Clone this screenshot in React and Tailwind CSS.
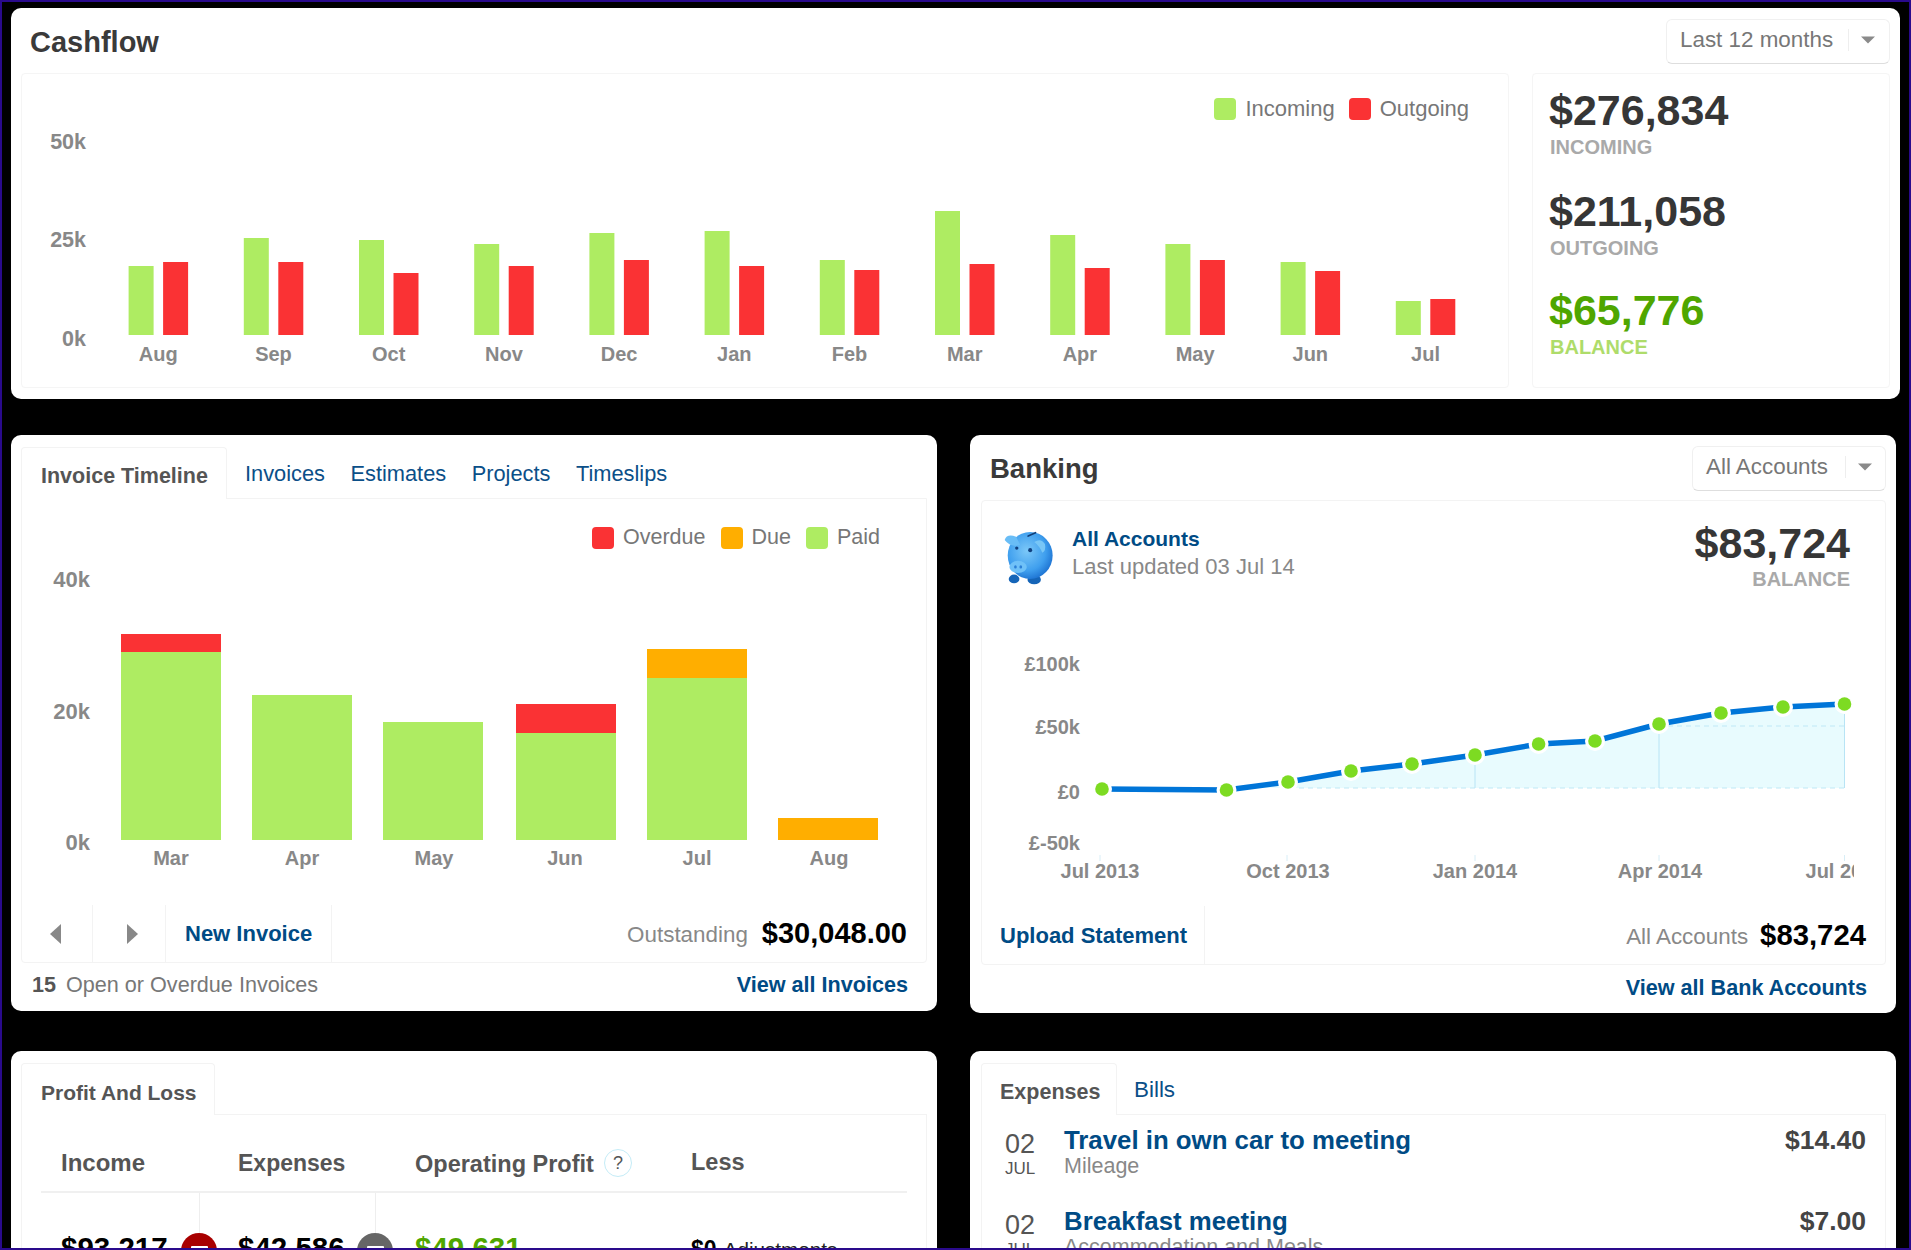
import React from "react";

const GREEN = "#aeec62";
const RED = "#fa3234";
const ORANGE = "#ffae00";

const cash = [
  ["Aug", 266, 262], ["Sep", 238, 262], ["Oct", 240, 273], ["Nov", 244, 266],
  ["Dec", 233, 260], ["Jan", 231, 266], ["Feb", 260, 270], ["Mar", 211, 264],
  ["Apr", 235, 268], ["May", 244, 260], ["Jun", 262, 271], ["Jul", 301, 299],
];

const inv = [
  { m: "Mar", x: 121, lx: 171, s: [[652, 840, GREEN], [634, 652, RED]] },
  { m: "Apr", x: 252, lx: 302, s: [[695, 840, GREEN]] },
  { m: "May", x: 383, lx: 434, s: [[722, 840, GREEN]] },
  { m: "Jun", x: 516, lx: 565, s: [[733, 840, GREEN], [704, 733, RED]] },
  { m: "Jul", x: 647, lx: 697, s: [[678, 840, GREEN], [649, 678, ORANGE]] },
  { m: "Aug", x: 778, lx: 829, s: [[818, 840, ORANGE]] },
];

const pts = [
  [1102, 789], [1226.5, 790], [1288, 782], [1351, 771], [1412, 764], [1475, 755],
  [1538.6, 744], [1595, 741], [1659, 724], [1721, 713], [1783, 707], [1844.5, 704],
];

function Caret() {
  return (
    <svg width="14" height="8" viewBox="0 0 14 8" className="block">
      <path d="M0 0.5 H14 L7 7.5 Z" fill="#8a8a8a" />
    </svg>
  );
}

function Dropdown({ label, w, textW }) {
  return (
    <div
      style={{ width: w }}
      className="flex h-[45px] items-center rounded-md border border-[#f0f0f0] border-b-[#dedede] bg-white pb-[3px] pl-[13px] text-[22.4px] text-[#777]"
    >
      <span style={{ width: textW }} className="whitespace-nowrap">{label}</span>
      <span className="h-[22px] w-px bg-[#eeeeee]" />
      <span className="ml-[12px]"><Caret /></span>
    </div>
  );
}

function Legend({ items, small }) {
  return (
    <div className="flex items-center">
      {items.map(([label, color, ml]) => (
        <div key={label} style={{ marginLeft: ml }} className="flex items-center">
          <span style={{ background: color }} className="h-[22px] w-[22px] rounded-[4px]" />
          <span className={`ml-[9px] leading-none text-[#777] ${small ? "text-[21.5px]" : "text-[22px]"}`}>{label}</span>
        </div>
      ))}
    </div>
  );
}

function Stat({ value, label, color, labelColor, mt }) {
  return (
    <div style={{ marginTop: mt }}>
      <div style={{ color }} className="-ml-[1px] h-[48px] text-[43px] font-bold leading-[48px]">{value}</div>
      <div style={{ color: labelColor }} className="mt-[1px] h-[24px] text-[20px] font-bold leading-[24px]">{label}</div>
    </div>
  );
}

function CashChart() {
  return (
    <svg viewBox="22 130 1486 256" width="1486" height="256" className="block">
      {[["50k", 149], ["25k", 247], ["0k", 346]].map(([t, y]) => (
        <text key={t} x="86" y={y} textAnchor="end" fontSize="21.5" fontWeight="700" fill="#888">{t}</text>
      ))}
      {cash.map(([m, g, r], i) => {
        const x = 128.6 + i * 115.2;
        return (
          <g key={m}>
            <rect x={x} y={g} width="25" height={335 - g} fill={GREEN} />
            <rect x={x + 34.5} y={r} width="25" height={335 - r} fill={RED} />
            <text x={x + 29.7} y="361" textAnchor="middle" fontSize="20" fontWeight="700" fill="#888">{m}</text>
          </g>
        );
      })}
    </svg>
  );
}

function InvoiceChart() {
  return (
    <svg viewBox="22 560 904 345" width="904" height="345" className="block">
      {[["40k", 587], ["20k", 719], ["0k", 850]].map(([t, y]) => (
        <text key={t} x="90" y={y} textAnchor="end" fontSize="22" fontWeight="700" fill="#888">{t}</text>
      ))}
      {inv.map((b) => (
        <g key={b.m}>
          {b.s.map(([t, bot, c]) => (
            <rect key={t} x={b.x} y={t} width="100" height={bot - t} fill={c} />
          ))}
          <text x={b.lx} y="865" textAnchor="middle" fontSize="20" fontWeight="700" fill="#888">{b.m}</text>
        </g>
      ))}
    </svg>
  );
}

function LineChart() {
  const line = pts.map((p) => p.join(",")).join(" ");
  const area = `1250,788 ${pts.slice(2).map((p) => p.join(",")).join(" ")} 1844.5,788`;
  return (
    <svg viewBox="982 641 903 265" width="903" height="265" className="block">
      <defs>
        <clipPath id="xclip"><rect x="982" y="641" width="872" height="265" /></clipPath>
      </defs>
      <polygon points={area} fill="#e8fbfe" />
      <line x1="1290" y1="788" x2="1844.5" y2="788" stroke="#bfe8f6" strokeWidth="1" strokeDasharray="5 4" />
      <line x1="1659" y1="726" x2="1844.5" y2="726" stroke="#bfe8f6" strokeWidth="1" strokeDasharray="5 4" />
      {[[1475, 755], [1659, 724], [1844.5, 704]].map(([x, y]) => (
        <line key={x} x1={x} y1={y} x2={x} y2="788" stroke="#b8e4f5" strokeWidth="1" />
      ))}
      {[1100, 1287, 1475, 1659, 1844.5].map((x) => (
        <line key={x} x1={x} y1="855" x2={x} y2="861" stroke="#d8eef7" strokeWidth="1" />
      ))}
      <polyline points={line} fill="none" stroke="#0075d8" strokeWidth="5.5" />
      {pts.map(([x, y]) => (
        <g key={x}>
          <circle cx={x} cy={y} r="10" fill="#fff" />
          <circle cx={x} cy={y} r="6.8" fill="#7ddb22" />
        </g>
      ))}
      {[["£100k", 671], ["£50k", 734], ["£0", 799], ["£-50k", 850]].map(([t, y]) => (
        <text key={t} x="1080" y={y} textAnchor="end" fontSize="20" fontWeight="700" fill="#888">{t}</text>
      ))}
      <g clipPath="url(#xclip)">
        {[["Jul 2013", 1100], ["Oct 2013", 1288], ["Jan 2014", 1475], ["Apr 2014", 1660], ["Jul 2014", 1845]].map(([t, x]) => (
          <text key={t} x={x} y="878" textAnchor="middle" fontSize="20" fontWeight="700" fill="#888">{t}</text>
        ))}
      </g>
    </svg>
  );
}

function Piggy() {
  return (
    <svg viewBox="30 50 170 170" width="57" height="57" className="block shrink-0">
      <defs>
        <radialGradient id="pig" cx="0.42" cy="0.4" r="0.65">
          <stop offset="0" stopColor="#7cc8f8" />
          <stop offset="0.65" stopColor="#3f9fee" />
          <stop offset="1" stopColor="#1a6fd0" />
        </radialGradient>
      </defs>
      <ellipse cx="72" cy="202" rx="16" ry="13" fill="#1565b8" />
      <ellipse cx="132" cy="204" rx="20" ry="14" fill="#1565b8" />
      <ellipse cx="120" cy="132" rx="67" ry="70" fill="url(#pig)" />
      <path d="M44 86 Q50 66 78 76 L90 100 Q62 110 44 86 Z" fill="#69bdf6" />
      <path d="M132 92 Q152 78 164 98 Q168 118 156 124 Q148 104 132 92 Z" fill="#78c6f6" />
      <ellipse cx="84" cy="166" rx="26" ry="18" fill="#6fc1f8" />
      <ellipse cx="76" cy="166" rx="4" ry="5" fill="#2b7fd6" />
      <ellipse cx="92" cy="166" rx="4" ry="5" fill="#2b7fd6" />
      <circle cx="80" cy="110" r="5" fill="#10407f" />
      <circle cx="120" cy="116" r="6" fill="#10407f" />
      <path d="M114 74 L136 64" stroke="#123f78" strokeWidth="5" strokeLinecap="round" />
    </svg>
  );
}

function Tab({ children, w, pl = 19, size = "text-[21.5px]" }) {
  return (
    <div
      style={{ width: w, paddingLeft: pl }}
      className={`relative z-10 -mb-px flex h-[52px] items-center rounded-t border border-b-0 border-[#f3f3f3] bg-white pt-[6px] font-bold text-[#555] ${size}`}
    >
      {children}
    </div>
  );
}

function Arrow({ dir }) {
  return (
    <svg width="12" height="20" viewBox="0 0 12 20" className="block">
      <path d={dir === "l" ? "M11 0 V20 L0 10 Z" : "M1 0 V20 L12 10 Z"} fill="#888" />
    </svg>
  );
}

function ExpenseRow({ title, sub, amount, mt }) {
  return (
    <div style={{ marginTop: mt }} className="flex pl-[23px] pr-[19px]">
      <div className="w-[59px] shrink-0 pt-[2px] text-[#555]">
        <div className="h-[32px] text-[27px] leading-[34px]">02</div>
        <div className="h-[20px] text-[17px] leading-[20px]">JUL</div>
      </div>
      <div className="flex-1">
        <div className="-mt-[1px] h-[32px] text-[25.8px] font-bold leading-[32px] text-[#004b85]">{title}</div>
        <div className="-mt-[3px] h-[26px] text-[21.5px] leading-[26px] text-[#888]">{sub}</div>
      </div>
      <div className="-mt-[1px] h-[32px] text-[26.5px] font-bold leading-[32px] text-[#444]">{amount}</div>
    </div>
  );
}

function Value({ children, w, line, badge, left }) {
  return (
    <div
      style={{ width: w }}
      className={`relative h-[56px] shrink-0 ${line ? "border-r border-[#eeeeee]" : ""}`}
    >
      {badge && (
        <div style={{ background: badge }} className="absolute right-[-18px] top-[40px] z-10 flex h-[36px] w-[36px] justify-center rounded-full pt-[13px]">
          <span className="h-[5px] w-[17px] rounded-[1px] bg-white" />
        </div>
      )}
      <div style={{ left }} className="absolute top-[38px] whitespace-nowrap text-[29.5px] font-bold leading-[34px] text-black">{children}</div>
    </div>
  );
}

export default function App() {
  return (
    <div className="h-[1250px] w-[1911px] overflow-hidden border-2 border-[#2a0a8c] bg-black pl-[9px] pt-[6px] font-['Liberation_Sans',sans-serif]">
      {/* Cashflow */}
      <section className="flex h-[391px] w-[1889px] flex-col rounded-[10px] bg-white px-[10px] pt-[11px]">
        <div className="flex h-[54px] items-start justify-between">
          <h2 className="pl-[9px] pt-[5px] text-[29px] font-bold leading-[36px] text-[#3a3a3a]">Cashflow</h2>
          <Dropdown label="Last 12 months" w={224} textW={168} />
        </div>
        <div className="flex gap-[23px]">
          <div className="h-[315px] w-[1488px] rounded border border-[#f5f5f5]">
            <div className="flex h-[56px] items-end justify-end pb-[10px] pr-[39px]">
              <Legend items={[["Incoming", GREEN, 0], ["Outgoing", RED, 14]]} />
            </div>
            <CashChart />
          </div>
          <div className="h-[315px] w-[358px] rounded border border-[#f5f5f5] pl-[17px]">
            <Stat value="$276,834" label="INCOMING" color="#363636" labelColor="#a9a9a9" mt={12} />
            <Stat value="$211,058" label="OUTGOING" color="#363636" labelColor="#a9a9a9" mt={28} />
            <Stat value="$65,776" label="BALANCE" color="#4fa600" labelColor="#aedc6a" mt={26} />
          </div>
        </div>
      </section>

      <div className="mt-[36px] flex items-start gap-[33px]">
        {/* Invoice timeline */}
        <section className="h-[576px] w-[926px] rounded-[10px] bg-white px-[10px] pt-[12px]">
          <div className="flex items-start">
            <Tab w={206}>Invoice Timeline</Tab>
            <nav className="flex gap-[25.5px] pl-[18px] pt-[14px] text-[21.8px] leading-[26px] text-[#0b4f88]">
              <span>Invoices</span><span>Estimates</span><span>Projects</span><span>Timeslips</span>
            </nav>
          </div>
          <div className="h-[465px] w-[906px] rounded-b border border-[#f3f3f3]">
            <div className="flex h-[61px] items-end justify-end pb-[11px] pr-[46px]">
              <Legend small items={[["Overdue", RED, 0], ["Due", ORANGE, 15], ["Paid", GREEN, 15]]} />
            </div>
            <InvoiceChart />
            <div className="flex h-[57px] items-center">
              <div className="flex h-full w-[71px] items-center justify-center border-r border-[#f3f3f3] pr-[2px]"><Arrow dir="l" /></div>
              <div className="flex h-full w-[73px] items-center justify-center border-r border-[#f3f3f3] pl-[5px]"><Arrow dir="r" /></div>
              <div className="flex h-full w-[166px] items-center border-r border-[#f3f3f3] pl-[19px] text-[22px] font-bold text-[#004b85]">New Invoice</div>
              <div className="flex flex-1 items-center justify-end pr-[19px]">
                <span className="mt-[3px] text-[22.4px] text-[#888]">Outstanding</span>
                <span className="ml-[14px] text-[29px] font-bold text-black">$30,048.00</span>
              </div>
            </div>
          </div>
          <div className="-ml-[10px] -mr-[10px] flex h-[45px] items-center justify-between pl-[21px] pr-[29px] text-[21.6px]">
            <div><b className="font-bold text-[#555]">15</b><span className="ml-[10px] text-[#777]">Open or Overdue Invoices</span></div>
            <b className="font-bold text-[#004b85]">View all Invoices</b>
          </div>
        </section>

        {/* Banking */}
        <section className="h-[578px] w-[926px] rounded-[10px] bg-white pl-[11px] pr-[10px] pt-[11px]">
          <div className="flex h-[54px] items-start justify-between">
            <h2 className="pl-[9px] pt-[6px] text-[27.5px] font-bold leading-[34px] text-[#3a3a3a]">Banking</h2>
            <Dropdown label="All Accounts" w={194} textW={139} />
          </div>
          <div className="h-[465px] w-[905px] rounded border border-[#f3f3f3]">
            <div className="flex h-[140px] justify-between pl-[18px] pr-[35px] pt-[25px]">
              <div className="flex">
                <span className="mt-[2px]"><Piggy /></span>
                <div className="ml-[15px]">
                  <div className="text-[21px] font-bold leading-[26px] text-[#004b85]">All Accounts</div>
                  <div className="mt-[2px] text-[22px] leading-[26px] text-[#888]">Last updated 03 Jul 14</div>
                </div>
              </div>
              <div className="-mt-[7px] text-right">
                <div className="text-[43px] font-bold leading-[48px] text-[#363636]">$83,724</div>
                <div className="text-[20px] font-bold leading-[24px] text-[#a9a9a9]">BALANCE</div>
              </div>
            </div>
            <LineChart />
            <div className="flex h-[58px] items-center">
              <div className="flex h-full w-[223px] items-center border-r border-[#f3f3f3] pl-[18px] text-[22px] font-bold text-[#004b85]">Upload Statement</div>
              <div className="flex flex-1 items-center justify-end pr-[19px]">
                <span className="mt-[3px] text-[22.4px] text-[#888]">All Accounts</span>
                <span className="ml-[12px] text-[29.3px] font-bold text-black">$83,724</span>
              </div>
            </div>
          </div>
          <div className="flex h-[47px] items-center justify-end pr-[19px] text-[21.6px] font-bold text-[#004b85]">View all Bank Accounts</div>
        </section>
      </div>

      <div className="mt-[38px] flex items-start gap-[33px]">
        {/* Profit and loss */}
        <section className="h-[300px] w-[926px] rounded-t-[10px] bg-white px-[10px] pt-[12px]">
          <Tab w={194} size="text-[21px]">Profit And Loss</Tab>
          <div className="h-[200px] w-[906px] border border-[#f3f3f3] px-[19px]">
            <div className="flex h-[78px] items-center border-b-2 border-[#f0f0f0] pt-[20px] text-[23.5px] font-bold text-[#555]">
              <span className="w-[197px] pl-[20px] text-[24px]">Income</span>
              <span className="w-[177px] text-[23px]">Expenses</span>
              <span className="w-[189px] whitespace-nowrap pt-[3px]">Operating Profit</span>
              <span className="flex h-[28px] w-[28px] items-center justify-center rounded-full border border-[#c4ecf7] text-[18px] font-normal text-[#555]">?</span>
              <span className="ml-[59px]">Less</span>
            </div>
            <div className="flex">
              <Value w={159} line badge="#a80000" left={20}>$93,217</Value>
              <Value w={176} line badge="#666666" left={38}>$42,586</Value>
              <div className="relative h-[56px] w-[315px] shrink-0">
                <div className="absolute left-[39px] top-[38px] whitespace-nowrap text-[29.5px] font-bold leading-[34px] text-[#4fa600]">$49,631</div>
              </div>
              <div className="relative h-[56px] flex-1">
                <div className="absolute left-0 top-[39px] flex items-baseline whitespace-nowrap text-[#222]">
                  <b className="text-[23px] font-bold text-black">$0</b>
                  <span className="ml-[7px] text-[20.7px]">Adjustments</span>
                </div>
              </div>
            </div>
          </div>
        </section>

        {/* Expenses */}
        <section className="h-[300px] w-[926px] rounded-t-[10px] bg-white pl-[11px] pr-[10px] pt-[12px]">
          <div className="flex items-start">
            <Tab w={136} pl={18}>Expenses</Tab>
            <span className="pl-[17px] pt-[14px] text-[22.4px] leading-[26px] text-[#0b4f88]">Bills</span>
          </div>
          <div className="h-[200px] w-[905px] border border-[#f3f3f3] pt-[10px]">
            <ExpenseRow title="Travel in own car to meeting" sub="Mileage" amount="$14.40" mt={0} />
            <ExpenseRow title="Breakfast meeting" sub="Accommodation and Meals" amount="$7.00" mt={27} />
          </div>
        </section>
      </div>
    </div>
  );
}
